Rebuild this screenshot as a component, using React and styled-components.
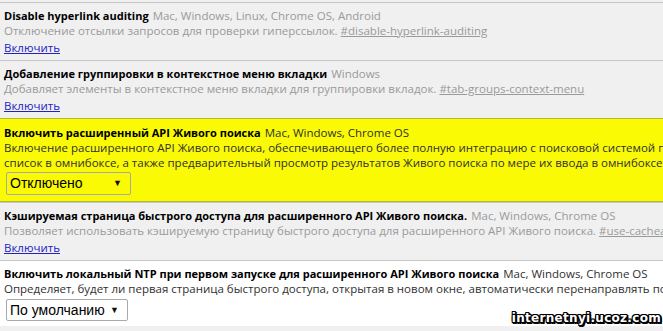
import React from "react";
import styled, { createGlobalStyle } from "styled-components";

const GlobalStyle = createGlobalStyle`
  html, body {
    margin: 0;
    padding: 0;
    background: #f0f0f0;
    overflow: hidden;
  }
  body {
    font-family: "Open Sans", "Noto Sans", sans-serif;
    font-size: 11.5px;
    line-height: 15px;
  }
`;

const Page = styled.div`
  position: relative;
  width: 663px;
  height: 331px;
  padding-top: 2px;
  box-sizing: border-box;
  overflow: hidden;
`;

const Experiment = styled.div`
  border-top: 1px solid ${(p) => (p.$highlight ? "#b8b832" : "#c6c6c6")};
  border-bottom: ${(p) => (p.$highlight ? "1px solid #b8b832" : "none")};
  background: ${(p) => (p.$highlight ? "#fafa05" : p.$enabled ? "#ffffff" : "#f0f0f0")};
  color: ${(p) => (p.$enabled ? "#303030" : "#9a9a9a")};
  padding: ${(p) => (p.$highlight ? "6px 4px 6px" : "5px 4px 5px")};
  white-space: nowrap;
  &:last-of-type {
    border-bottom: 1px solid #c6c6c6;
  }
`;

const Title = styled.div`
  height: 15px;
`;

const Name = styled.b`
  color: #000;
  font-weight: 700;
  font-size: 11px;
  margin-right: 4px;
`;

const Platforms = styled.span``;

const Description = styled.div``;

const Hash = styled.a`
  color: inherit;
  text-decoration: underline;
`;

const EnableLink = styled.a`
  display: block;
  margin-top: 2px;
  color: #2222c4;
  text-decoration: underline;
`;

const SelectBox = styled.div`
  display: inline-flex;
  align-items: center;
  justify-content: space-between;
  box-sizing: border-box;
  width: ${(p) => p.$width}px;
  height: ${(p) => p.$height}px;
  margin: ${(p) => p.$top}px 0 0 2px;
  padding: 0 8px 0 3px;
  border: 1px solid #a9a9a9;
  border-radius: 2px;
  background: ${(p) => (p.$highlight ? "transparent" : "#ffffff")};
  color: #000;
  font-family: "Liberation Sans", Arial, sans-serif;
  font-size: 14px;
`;

const Arrow = styled.span`
  font-size: 9px;
  color: #111;
`;

const Watermark = styled.div`
  position: absolute;
  right: 2px;
  bottom: 5px;
  font-family: "DejaVu Sans", sans-serif;
  font-weight: 700;
  font-size: 12px;
  letter-spacing: 0.3px;
  color: #fff;
  text-shadow: -1px -1px 0 #000, 1px -1px 0 #000, -1px 1px 0 #000,
    1px 1px 0 #000, 0 -1px 0 #000, 0 1px 0 #000, -1px 0 0 #000, 1px 0 0 #000,
    2px 0 0 #000, 0 2px 0 #000, 2px 2px 0 #000;
`;

const App = () => (
  <>
    <GlobalStyle />
    <Page>
      <Experiment>
        <Title>
          <Name>Disable hyperlink auditing</Name>
          <Platforms>Mac, Windows, Linux, Chrome OS, Android</Platforms>
        </Title>
        <Description>
          Отключение отсылки запросов для проверки гиперссылок.{" "}
          <Hash>#disable-hyperlink-auditing</Hash>
        </Description>
        <EnableLink>Включить</EnableLink>
      </Experiment>

      <Experiment>
        <Title>
          <Name>Добавление группировки в контекстное меню вкладки</Name>
          <Platforms>Windows</Platforms>
        </Title>
        <Description>
          Добавляет элементы в контекстное меню вкладки для группировки вкладок.{" "}
          <Hash>#tab-groups-context-menu</Hash>
        </Description>
        <EnableLink>Включить</EnableLink>
      </Experiment>

      <Experiment $enabled $highlight>
        <Title>
          <Name>Включить расширенный API Живого поиска</Name>
          <Platforms>Mac, Windows, Chrome OS</Platforms>
        </Title>
        <Description>
          Включение расширенного API Живого поиска, обеспечивающего более полную
          интеграцию с поисковой системой по умолчанию,
          <br />
          список в омнибоксе, а также предварительный просмотр результатов
          Живого поиска по мере их ввода в омнибоксе.{" "}
          <Hash>#enable-instant-extended-api</Hash>
        </Description>
        <SelectBox $highlight $width={125} $height={23} $top={2}>
          Отключено <Arrow>▼</Arrow>
        </SelectBox>
      </Experiment>

      <Experiment>
        <Title>
          <Name>Кэшируемая страница быстрого доступа для расширенного API Живого поиска.</Name>
          <Platforms>Mac, Windows, Chrome OS</Platforms>
        </Title>
        <Description>
          Позволяет использовать кэшируемую страницу быстрого доступа для
          расширенного API Живого поиска.{" "}
          <Hash>#use-cacheable-new-tab-page</Hash>
        </Description>
        <EnableLink>Включить</EnableLink>
      </Experiment>

      <Experiment $enabled>
        <Title>
          <Name>Включить локальный NTP при первом запуске для расширенного API Живого поиска</Name>
          <Platforms>Mac, Windows, Chrome OS</Platforms>
        </Title>
        <Description>
          Определяет, будет ли первая страница быстрого доступа, открытая в
          новом окне, автоматически перенаправлять пользователя на локальную
          страницу.
        </Description>
        <SelectBox $width={122} $height={22} $top={3}>
          По умолчанию <Arrow>▼</Arrow>
        </SelectBox>
      </Experiment>

      <Watermark>internetnyi.ucoz.com</Watermark>
    </Page>
  </>
);

export default App;
